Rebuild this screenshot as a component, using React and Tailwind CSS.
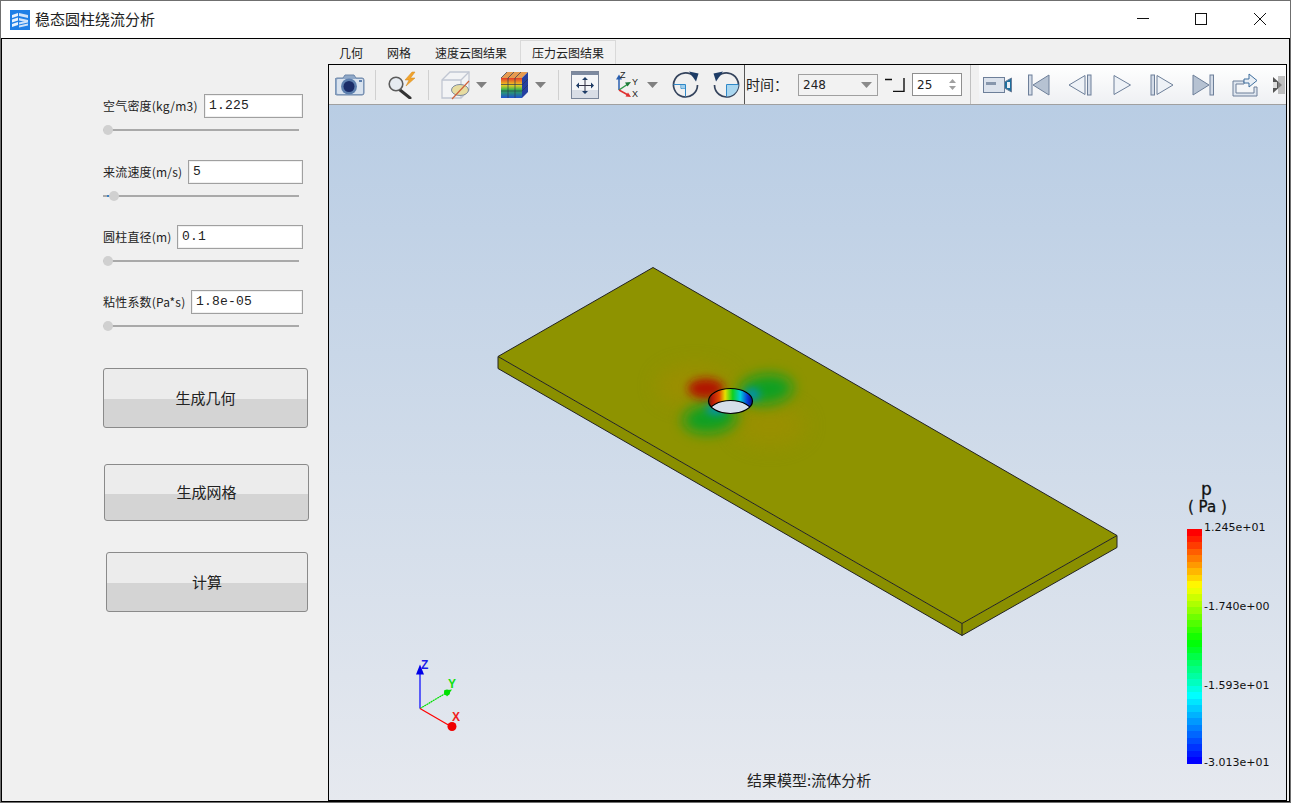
const cjk = { fontFamily: '"Noto Sans CJK SC","Liberation Sans",sans-serif' };
const mono = { fontFamily: '"Liberation Mono","DejaVu Sans Mono",monospace' };

function Row({ label, value, pos = 0, mb, w, tick }) {
  return (
    <div className={mb}>
      <div className="flex items-center justify-between h-[24px] w-[200px]">
        <span className="text-[12px] text-[#222] whitespace-nowrap tracking-[0.2px]" style={cjk}>{label}</span>
        <div className={`${w} h-[24px] bg-white border border-[#a0a0a0] shadow-[inset_0_0_0_1px_#f0f0f0] flex items-center pl-[4px] text-[13px] tracking-[0.2px] text-[#222]`} style={mono}>{value}</div>
      </div>
      <div className="relative mt-[6px] h-[12px] w-[196px] flex items-center">
        <div className="w-full h-[2px] bg-[#a9a9a9]" />
        {tick && <div className="absolute left-[4px] top-[5px] w-[4px] h-[2px] bg-[#3c7fc0]" />}
        <div className="absolute top-[1px] w-[10px] h-[10px] rounded-full bg-[#d0d0d0]" style={{ left: pos }} />
      </div>
    </div>
  );
}

function Btn({ children, cls }) {
  return (
    <button className={`flex items-center justify-center border border-[#8a8a8a] rounded-[3px] bg-[linear-gradient(#ececec_0,#ececec_52%,#d4d4d4_52%)] text-[15px] text-[#222] ${cls}`} style={cjk}>
      {children}
    </button>
  );
}

const Sep = ({ cls }) => <div className={`w-px h-[30px] bg-[#d0d0d0] ${cls}`} />;
const Drop = ({ cls }) => (
  <svg width="11" height="6" className={cls} viewBox="0 0 11 6"><path d="M0 0h11L5.5 6z" fill="#808080" /></svg>
);

const Camera = () => (
  <svg width="30" height="24" viewBox="0 0 30 24" className="ml-[6px]">
    <path d="M2 5h6l2-3h9l2 3h6a2 2 0 0 1 2 2v13a2 2 0 0 1-2 2H2a2 2 0 0 1-2-2V7a2 2 0 0 1 2-2z" fill="#8fa8c8" stroke="#6d86a8" />
    <rect x="2" y="6" width="26" height="15" rx="1" fill="#d8e2ee" />
    <circle cx="14" cy="13.5" r="8" fill="#5d7fae" />
    <circle cx="14" cy="13.5" r="5.5" fill="#1a2c68" />
    <rect x="24" y="7" width="3" height="2" fill="#5d7fae" />
  </svg>
);
const Magnifier = () => (
  <svg width="30" height="28" viewBox="0 0 30 28" className="ml-[12px]">
    <path d="M12 19l10 8" stroke="#333" strokeWidth="3" strokeLinecap="round" />
    <circle cx="8" cy="13" r="6.8" fill="#e6ebf1" stroke="#5c5c5c" strokeWidth="1.6" />
    <path d="M24 1l-7 8h4l-3 6 9-8h-4.5l4.5-6z" fill="#f2a32b" stroke="#d08a20" strokeWidth=".5" />
  </svg>
);
const CubeSlash = () => (
  <svg width="30" height="30" viewBox="0 0 30 30">
    <path d="M1 10l8-8h19v18l-8 8H1z" fill="#f2f3f5" stroke="#c0c6d2" strokeWidth="1.3" />
    <path d="M1 10h19v18M20 10l8-8" fill="none" stroke="#c0c6d2" strokeWidth="1.3" />
    <ellipse cx="19" cy="20" rx="8.5" ry="5.5" fill="#e7dca0" stroke="#7f8c9e" />
    <path d="M11 29L28 11" stroke="#d0603a" strokeWidth="1.2" />
  </svg>
);
const RainbowCube = () => (
  <svg width="30" height="28" viewBox="0 0 30 28">
    <defs>
      <linearGradient id="rb" x1="0" y1="0" x2="0" y2="1">
        <stop offset="0" stopColor="#e23b2a" /><stop offset=".35" stopColor="#f0d020" />
        <stop offset=".6" stopColor="#30b050" /><stop offset="1" stopColor="#2050d0" />
      </linearGradient>
    </defs>
    <path d="M1 7l6-6h21l-6 6z" fill="#e59a50" />
    <path d="M22 7l6-6v20l-6 6z" fill="#2440a0" />
    <rect x="1" y="7" width="21" height="20" fill="url(#rb)" />
    <path d="M8 7v20M15 7v20M1 13.5h21M1 20h21M7 1L1 7M14 1L8 7M21 1l-6 6M22 14l6-6M22 20l6-6" stroke="#2b3a55" strokeWidth=".7" />
  </svg>
);
const Fit = () => (
  <svg width="28" height="28" viewBox="0 0 28 28">
    <rect x=".5" y=".5" width="27" height="27" fill="#d9dee6" stroke="#7a8699" />
    <rect x="1" y="1" width="26" height="3" fill="#7c8aa0" />
    <rect x="1" y="4" width="26" height="15" fill="#f4f6f8" />
    <path d="M14 8v13M8 14.5h12" stroke="#334" strokeWidth="1" />
    <path d="M14 6l-3 3h6zM14 23l-3-3h6zM5 14.5l3-3v6zM23 14.5l-3-3v6z" fill="#1d3c66" />
  </svg>
);
const Axes = () => (
  <svg width="26" height="30" viewBox="0 0 26 30" className="ml-[17px]">
    <path d="M3 20V8" stroke="#2a5fb0" strokeWidth="1.5" /><path d="M3 4.5l-3 5h6z" fill="#2a5fb0" />
    <path d="M3 20l9-6" stroke="#2e9a48" strokeWidth="1.5" /><path d="M15 12l-6 .5 2.5 4z" fill="#1d7a38" />
    <path d="M3 20l9 5" stroke="#e03030" strokeWidth="1.5" /><path d="M15 27l-5.5-.5 2.5-4z" fill="#e03030" />
    <text x="4" y="8" fontSize="9" fill="#222" fontFamily="Liberation Sans">Z</text>
    <text x="16" y="15" fontSize="9" fill="#222" fontFamily="Liberation Sans">Y</text>
    <text x="16" y="27" fontSize="9" fill="#222" fontFamily="Liberation Sans">X</text>
  </svg>
);
const RotCw = () => (
  <svg width="27" height="27" viewBox="0 0 27 27" className="ml-[14px]">
    <path d="M22 5.5A12 12 0 1 0 25.5 14" fill="none" stroke="#34435c" strokeWidth="1.7" />
    <path d="M17 .5l9.5 2-2.5 8z" fill="#1d3c66" />
    <path d="M1.5 13.5h12v12M9 13.5v4h4" fill="none" stroke="#2f88c8" strokeWidth="1" />
    <rect x="9.5" y="14" width="3.5" height="3.5" fill="#9fd0ee" />
  </svg>
);
const RotCcw = () => (
  <svg width="27" height="27" viewBox="0 0 27 27" className="ml-[14px]">
    <path d="M5 5.5A12 12 0 1 1 1.5 14" fill="none" stroke="#34435c" strokeWidth="1.7" />
    <path d="M10 .5L.5 2.5l2.5 8z" fill="#1d3c66" />
    <path d="M25.5 13.5h-12v12M18 13.5v4h-4" fill="none" stroke="#2f88c8" strokeWidth="1" />
    <path d="M14 14h11.5a12 12 0 0 1-11.5 11.5z" fill="#a9d6ef" />
  </svg>
);

const iconStroke = "#6d7f99";
const iconFill = "#d3dbe7";
const VideoCam = () => (
  <svg width="30" height="16" viewBox="0 0 30 16">
    <rect x=".5" y=".5" width="21" height="15" fill="#dbe2ec" stroke={iconStroke} />
    <rect x="3" y="5" width="10" height="3" fill="#8696ac" />
    <path d="M21.5 5l7-4v14l-7-4z" fill="#1d6f9e" stroke={iconStroke} />
    <rect x="24" y="5" width="3" height="6" fill="#e8eef5" />
  </svg>
);
const First = () => (
  <svg width="22" height="22" viewBox="0 0 22 22"><rect x=".5" y="1" width="3.5" height="20" fill={iconFill} stroke={iconStroke} /><path d="M21 1v20L5 11z" fill="#b6c2d2" stroke={iconStroke} /></svg>
);
const Prev = () => (
  <svg width="24" height="22" viewBox="0 0 24 22"><path d="M17 1.5v19L1 11z" fill="#eef2f7" stroke={iconStroke} /><rect x="19.5" y="1" width="3.5" height="20" fill={iconFill} stroke={iconStroke} /></svg>
);
const Play = () => (
  <svg width="18" height="22" viewBox="0 0 18 22"><path d="M1 1.5v19L17.5 11z" fill="#eef2f7" stroke={iconStroke} /></svg>
);
const Next = () => (
  <svg width="24" height="22" viewBox="0 0 24 22"><rect x="1" y="1" width="3.5" height="20" fill={iconFill} stroke={iconStroke} /><path d="M7 1.5v19L23 11z" fill="#eef2f7" stroke={iconStroke} /></svg>
);
const Last = () => (
  <svg width="22" height="22" viewBox="0 0 22 22"><path d="M1 1v20L17 11z" fill="#b6c2d2" stroke={iconStroke} /><rect x="18" y="1" width="3.5" height="20" fill={iconFill} stroke={iconStroke} /></svg>
);
const Export = () => (
  <svg width="26" height="24" viewBox="0 0 26 24">
    <path d="M1 8h11v3H4v9h18v-6h3v9H1z" fill="#dfe6ef" stroke={iconStroke} />
    <path d="M12 10V6h5V1l8 6.5-8 6.5V10z" fill="#e8eef5" stroke="#3f6f9e" />
  </svg>
);
const Clipped = () => (
  <svg width="14" height="20" viewBox="0 0 14 20">
    <path d="M1 2l9 8-9 8z" fill="#555" />
    <rect x="6" y="1" width="7" height="18" fill="#9a9a9a" opacity=".6" />
    <rect x="1" y="7" width="4" height="6" fill="#ddd" />
  </svg>
);

function Viewport() {
  return (
    <svg className="absolute inset-0 w-full h-full" viewBox="329 105 957 694">
      <defs>
        <clipPath id="top"><path d="M653 267L1117 535L962 623L498 356z" /></clipPath>
        <clipPath id="hole"><ellipse cx="730.5" cy="400.5" rx="22" ry="12.5" /></clipPath>
        <linearGradient id="wall" x1="708" x2="753" y1="0" y2="0" gradientUnits="userSpaceOnUse">
          <stop offset="0" stopColor="#5a2a00" /><stop offset=".1" stopColor="#b81a08" />
          <stop offset=".25" stopColor="#e04a00" /><stop offset=".38" stopColor="#e8e000" />
          <stop offset=".55" stopColor="#10d020" /><stop offset=".72" stopColor="#00d0d8" />
          <stop offset=".88" stopColor="#0838d8" /><stop offset="1" stopColor="#001070" />
        </linearGradient>
        <filter id="b3" x="-80%" y="-80%" width="260%" height="260%"><feGaussianBlur stdDeviation="4" /></filter>
        <filter id="b6" x="-80%" y="-80%" width="260%" height="260%"><feGaussianBlur stdDeviation="7" /></filter>
        <filter id="b10" x="-60%" y="-60%" width="220%" height="220%"><feGaussianBlur stdDeviation="10" /></filter>
      </defs>

      <path d="M498 356L962 623L1117 535V547L962 635L498 368z" fill="#8a8f00" />
      <path d="M498 356L653 267L1117 535L962 623z" fill="#8e9300" />
      <g clipPath="url(#top)">
        <ellipse cx="695" cy="385" rx="38" ry="20" fill="#a48c00" opacity=".6" filter="url(#b10)" />
        <ellipse cx="770" cy="425" rx="36" ry="20" fill="#a28e00" opacity=".55" filter="url(#b10)" />
        <ellipse cx="766" cy="389" rx="27" ry="15" fill="#10a020" filter="url(#b6)" transform="rotate(-6 766 389)" />
        <ellipse cx="710" cy="418" rx="27" ry="15" fill="#10a020" filter="url(#b6)" transform="rotate(-6 710 418)" />
        <ellipse cx="706" cy="388" rx="18" ry="10" fill="#b01406" filter="url(#b3)" />
        <ellipse cx="752" cy="394" rx="8" ry="6" fill="#0090c0" filter="url(#b3)" />
        <ellipse cx="716" cy="409" rx="10" ry="5" fill="#0090c0" filter="url(#b3)" />
      </g>
      <path d="M498 356L653 267L1117 535L962 623z" fill="none" stroke="#222" strokeWidth="1" />
      <path d="M498 356v12L962 635L1117 547V535M962 623v12" fill="none" stroke="#222" strokeWidth="1" />

      <ellipse cx="730.5" cy="400.5" rx="22" ry="12.5" fill="url(#wall)" />
      <ellipse cx="730.5" cy="412.5" rx="22" ry="12.5" fill="#d5deea" stroke="#000" strokeWidth="1.2" clipPath="url(#hole)" />
      <ellipse cx="730.5" cy="400.5" rx="22" ry="12.5" fill="none" stroke="#000" strokeWidth="1.2" />

      <path d="M420 708V672" stroke="#0000ff" strokeWidth="1.2" />
      <path d="M420 664l-4 10h8z" fill="#0000e8" />
      <path d="M420 708l27-16" stroke="#00e000" strokeWidth="1.2" strokeDasharray="2 .5" />
      <path d="M452 689l-8 1 3 6z" fill="#00e000" />
      <circle cx="447" cy="692" r="3" fill="#00e000" />
      <path d="M420 708l31 18" stroke="#ff0000" strokeWidth="1.2" />
      <circle cx="452" cy="726" r="4.5" fill="#f00000" />
      <text x="421" y="668" fontSize="12" fontWeight="700" fill="#1a1ae8" fontFamily="Liberation Sans">Z</text>
      <text x="448" y="687" fontSize="12" fontWeight="700" fill="#10e010" fontFamily="Liberation Sans">Y</text>
      <text x="452" y="720" fontSize="12" fontWeight="700" fill="#f02020" fontFamily="Liberation Sans">X</text>
    </svg>
  );
}

function Legend() {
  const stops = [];
  const n = 36;
  const col = (t) => {
    const h = t < 0.715 ? (t / 0.715) * 180 : 180 + ((t - 0.715) / 0.285) * 60;
    return `hsl(${h.toFixed(0)},100%,50%)`;
  };
  for (let i = 0; i < n; i++) {
    stops.push(`${col(i / (n - 1))} ${(i / n * 100).toFixed(2)}% ${((i + 1) / n * 100).toFixed(2)}%`);
  }
  const lab = "absolute left-[875px] text-[11px] leading-[14px] text-[#111] whitespace-nowrap";
  const ff = { fontFamily: '"DejaVu Sans","Liberation Sans",sans-serif' };
  return (
    <>
      <div className="absolute left-[872px] top-[376px] text-[17px] leading-[16px] text-[#111] [-webkit-text-stroke:0.3px_#111]" style={ff}>p</div>
      <div className="absolute left-[859px] top-[394px] text-[15px] leading-[16px] text-[#111] whitespace-nowrap [-webkit-text-stroke:0.3px_#111]" style={ff}>( Pa )</div>
      <div className="absolute left-[858px] top-[424px] w-[15px] h-[235px]" style={{ background: `linear-gradient(${stops.join(",")})` }} />
      <div className={lab} style={{ ...ff, top: 416 }}>1.245e+01</div>
      <div className={lab} style={{ ...ff, top: 495 }}>-1.740e+00</div>
      <div className={lab} style={{ ...ff, top: 574 }}>-1.593e+01</div>
      <div className={lab} style={{ ...ff, top: 651 }}>-3.013e+01</div>
      <div className="absolute left-[418px] top-[665px] text-[15px] leading-[20px] text-[#222] whitespace-nowrap" style={cjk}>结果模型:流体分析</div>
    </>
  );
}

export default function App() {
  const num = { fontFamily: '"DejaVu Sans","Liberation Sans",sans-serif' };
  return (
    <div className="w-[1291px] h-[803px] border border-[#6f6f6f] bg-white flex flex-col overflow-hidden" style={cjk}>
      <div className="h-[37px] flex items-center shrink-0 relative">
        <svg width="20" height="20" viewBox="0 0 20 20" className="ml-[9px] mr-[5px]">
          <rect width="20" height="20" fill="#1e7fe6" />
          <path d="M2 5l6-2v3l-6 2zM2 9.5l6-2v3l-6 2zM2 14l6-2v3l-6 2z" fill="#e9f3fd" />
          <path d="M9 3l9 2v3L9 6zM9 8l9 2v2.5L9 10.5zM9 12.5l9-2v2l-9 2zM9 15.5l9-2v2l-9 2z" fill="#cfe3fa" />
        </svg>
        <span className="text-[15px] text-[#222]">稳态圆柱绕流分析</span>
        <svg className="absolute left-[1136px] top-[17px]" width="12" height="2"><rect width="12" height="1" fill="#111" /></svg>
        <svg className="absolute left-[1194px] top-[12px]" width="12" height="12"><rect x=".5" y=".5" width="11" height="11" fill="none" stroke="#111" /></svg>
        <svg className="absolute left-[1253px] top-[12px]" width="12" height="12"><path d="M0 0l12 12M12 0L0 12" stroke="#111" /></svg>
      </div>

      <div className="flex-1 min-h-0 border border-black bg-[#f0f0f0] flex">
        <div className="w-[326px] shrink-0 pl-[101px] pt-[55px] bg-[#f0f0f0]">
          <Row label="空气密度(kg/m3)" value="1.225" w="w-[99px]" mb="mb-[24px]" />
          <Row label="来流速度(m/s)" value="5" w="w-[115px]" pos={6} tick mb="mb-[23px]" />
          <Row label="圆柱直径(m)" value="0.1" w="w-[126px]" mb="mb-[23px]" />
          <Row label="粘性系数(Pa*s)" value="1.8e-05" w="w-[112px]" mb="mb-[36px]" />
          <Btn cls="w-[205px] h-[60px]">生成几何</Btn>
          <Btn cls="w-[205px] h-[57px] mt-[36px] ml-[1px]">生成网格</Btn>
          <Btn cls="w-[202px] h-[60px] mt-[31px] ml-[3px]">计算</Btn>
        </div>

        <div className="flex-1 flex flex-col min-w-0 pr-[2px]">
          <div className="h-[25px] shrink-0 flex items-end text-[12px] text-[#222]">
            <div className="h-[24px] pt-[2px] flex items-center ml-[11px]">几何</div>
            <div className="h-[24px] pt-[2px] flex items-center ml-[24px]">网格</div>
            <div className="h-[24px] pt-[2px] flex items-center ml-[24px]">速度云图结果</div>
            <div className="h-[25px] flex items-center ml-[13px] px-[11px] border border-b-0 border-[#d9d9d9] bg-[#f2f2f2] -mb-px">压力云图结果</div>
          </div>
          <div className="flex-1 min-h-0 border border-black flex flex-col">
            <div className="h-[40px] shrink-0 bg-[#f0f0f0] border-b border-[#a0a0a0] flex items-center">
              <div className="flex items-center w-[415px] h-full shrink-0">
                <Camera />
                <Sep cls="ml-[10px]" />
                <Magnifier />
                <Sep cls="ml-[10px]" />
                <div className="ml-[12px]"><CubeSlash /></div>
                <Drop cls="ml-[5px]" />
                <div className="ml-[13px]"><RainbowCube /></div>
                <Drop cls="ml-[5px]" />
                <Sep cls="ml-[12px]" />
                <div className="ml-[12px]"><Fit /></div>
                <Axes />
                <Drop cls="ml-[5px]" />
                <RotCw />
                <RotCcw />
              </div>
              <div className="w-px h-full bg-[#555] shrink-0" />
              <div className="flex items-center w-[225px] h-full shrink-0 bg-[#f2f2f2] text-[15px] text-[#222]">
                <span className="ml-px w-[52px] shrink-0 text-[14px]">时间：</span>
                <div className="w-[80px] h-[22px] border border-[#a0a0a0] flex items-center justify-between pl-[4px] pr-[5px] text-[12px] shrink-0" style={num}>
                  248
                  <svg width="11" height="6" viewBox="0 0 11 6"><path d="M0 0h11L5.5 6z" fill="#8a8a8a" /></svg>
                </div>
                <svg width="20" height="14" viewBox="0 0 20 14" className="ml-[7px] shrink-0"><path d="M0 1.5h7M19 0v13.5H8" fill="none" stroke="#111" strokeWidth="1.4" /></svg>
                <div className="ml-[7px] w-[50px] h-[23px] border border-[#8f8f8f] bg-white flex items-center justify-between pl-[4px] pr-[5px] text-[12px] shrink-0" style={num}>
                  25
                  <svg width="7" height="13" viewBox="0 0 7 13"><path d="M3.5 1L7 5H0zM3.5 12L0 8h7z" fill="#a0a0a0" /></svg>
                </div>
              </div>
              <div className="w-px h-full bg-[#c0c0c0] shrink-0" />
              <div className="flex-1 h-full flex items-center bg-[linear-gradient(#ffffff,#eef0f3)] min-w-0 ml-[8px] overflow-hidden">
                <div className="ml-[4px] flex"><VideoCam /></div>
                <div className="ml-[15px] flex"><First /></div>
                <div className="ml-[18px] flex"><Prev /></div>
                <div className="ml-[21px] flex"><Play /></div>
                <div className="ml-[19px] flex"><Next /></div>
                <div className="ml-[18px] flex"><Last /></div>
                <div className="ml-[18px] flex"><Export /></div>
                <div className="ml-[14px] flex"><Clipped /></div>
              </div>
            </div>
            <div className="flex-1 relative min-h-0 bg-[linear-gradient(#b9cde4,#e6e9ef)] overflow-hidden">
              <Viewport />
              <Legend />
            </div>
          </div>
        </div>
      </div>
    </div>
  );
}
